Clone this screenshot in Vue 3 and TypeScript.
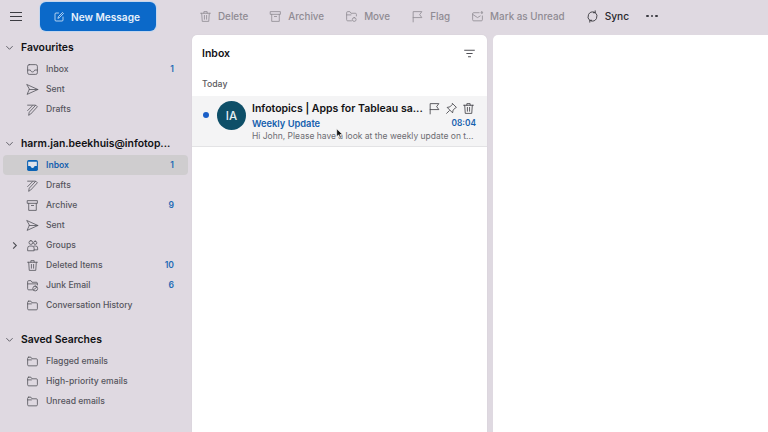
<script setup lang="ts">
interface FolderRow {
  name: string;
  icon: string;
  count?: number;
  selected?: boolean;
  expander?: boolean;
}

interface FolderGroup {
  title: string;
  rows: FolderRow[];
}

interface ToolItem {
  name: string;
  icon: string;
  active?: boolean;
}

// 24x24 stroke paths
const icons: Record<string, string[]> = {
  compose: ['M11 4H6a2 2 0 0 0-2 2v12a2 2 0 0 0 2 2h12a2 2 0 0 0 2-2v-6', 'M10 14l1-3 8-8 2 2-8 8z'],
  inbox: ['M6 3h12a3 3 0 0 1 3 3v12a3 3 0 0 1-3 3H6a3 3 0 0 1-3-3V6a3 3 0 0 1 3-3z', 'M3 13h5c1 2.500 2.200 3.500 4 3.500s3-1 4-3.500h5'],
  sent: ['M2 3l20 9-20 9 4-9z', 'M6 12h16'],
  drafts: ['M5 22l1-5L18 4l3 3L9 20z', 'M3 4h14', 'M3 14L12 5'],
  archive: ['M3 3h18v5H3z', 'M5 8v13h14V8', 'M10 12h4'],
  groups: ['M9 3a3.500 3.500 0 1 1 0 7 3.500 3.500 0 0 1 0-7z', 'M17 4a3 3 0 1 1 0 6 3 3 0 0 1 0-6z', 'M3 21v-4a4 4 0 0 1 4-4h4a4 4 0 0 1 4 4v4z', 'M15 13h3a3.500 3.500 0 0 1 3.500 3.500V20H15'],
  trash: ['M3 6h18', 'M9 6V3h6v3', 'M5 6l1 15h12l1-15', 'M10 10v7', 'M14 10v7'],
  junk: ['M12 20H5a2 2 0 0 1-2-2V5a2 2 0 0 1 2-2h4l2 3h8a2 2 0 0 1 2 2v3', 'M3 9h18', 'M17 13a4.500 4.500 0 1 1 0 9 4.500 4.500 0 0 1 0-9z', 'M14 20l6-5'],
  folder: ['M5 4h4l2 3h8a2 2 0 0 1 2 2v9a2 2 0 0 1-2 2H5a2 2 0 0 1-2-2V6a2 2 0 0 1 2-2z', 'M3 9h7'],
  move: ['M12 20H5a2 2 0 0 1-2-2V5a2 2 0 0 1 2-2h4l2 3h8a2 2 0 0 1 2 2v3', 'M3 9h8', 'M17 14a3.500 3.500 0 1 1 0 7 3.500 3.500 0 0 1 0-7z'],
  flag: ['M4 22V3h16l-4 5.500 4 5.500H4'],
  unread: ['M15 5H5a2 2 0 0 0-2 2v11a2 2 0 0 0 2 2h14a2 2 0 0 0 2-2v-7', 'M3 8l9 6 5-3', 'M20 3.500a1.500 1.500 0 1 1 0 3 1.500 1.500 0 0 1 0-3z'],
  sync: ['M15 3.800A9 9 0 0 0 7 19.500', 'M9 20.200A9 9 0 0 0 17 4.500', 'M17 1.500V5h-3.500', 'M7 22.500V19h3.500'],
  pin: ['M14 3l7 7-2 1-4 4-1 5-10-10 5-1 4-4z', 'M8 16l-5 5'],
  filter: ['M3 6h18', 'M7 12h10', 'M10 18h4']
};

const tools: ToolItem[] = [
  { name: 'Delete', icon: 'trash' },
  { name: 'Archive', icon: 'archive' },
  { name: 'Move', icon: 'move' },
  { name: 'Flag', icon: 'flag' },
  { name: 'Mark as Unread', icon: 'unread' },
  { name: 'Sync', icon: 'sync', active: true }
];

const groups: FolderGroup[] = [
  {
    title: 'Favourites',
    rows: [
      { name: 'Inbox', icon: 'inbox', count: 1 },
      { name: 'Sent', icon: 'sent' },
      { name: 'Drafts', icon: 'drafts' }
    ]
  },
  {
    title: 'harm.jan.beekhuis@infotop...',
    rows: [
      { name: 'Inbox', icon: 'inbox', count: 1, selected: true },
      { name: 'Drafts', icon: 'drafts' },
      { name: 'Archive', icon: 'archive', count: 9 },
      { name: 'Sent', icon: 'sent' },
      { name: 'Groups', icon: 'groups', expander: true },
      { name: 'Deleted Items', icon: 'trash', count: 10 },
      { name: 'Junk Email', icon: 'junk', count: 6 },
      { name: 'Conversation History', icon: 'folder' }
    ]
  },
  {
    title: 'Saved Searches',
    rows: [
      { name: 'Flagged emails', icon: 'folder' },
      { name: 'High-priority emails', icon: 'folder' },
      { name: 'Unread emails', icon: 'folder' }
    ]
  }
];
</script>

<template>
  <div class="app">
    <header class="toolbar">
      <div class="burger"><span></span><span></span><span></span></div>
      <button class="new-message">
        <svg class="ic compose" viewBox="0 0 24 24"><path v-for="d in icons.compose" :key="d" :d="d" /></svg>
        New Message
      </button>
      <div class="tools">
        <div v-for="tool in tools" :key="tool.name" class="tool" :class="{ active: tool.active }">
          <svg class="ic" viewBox="0 0 24 24"><path v-for="d in icons[tool.icon]" :key="d" :d="d" /></svg>
          <span>{{ tool.name }}</span>
        </div>
        <div class="more"><i></i><i></i><i></i></div>
      </div>
    </header>

    <div class="body">
      <aside class="sidebar">
        <section v-for="group in groups" :key="group.title" class="group">
          <div class="group-title">
            <svg class="chev" viewBox="0 0 10 10"><path d="M1.500 3.500L5 7l3.500-3.500" /></svg>
            <span>{{ group.title }}</span>
          </div>
          <div v-for="row in group.rows" :key="row.name" class="row" :class="{ selected: row.selected }">
            <svg v-if="row.expander" class="expander" viewBox="0 0 10 10"><path d="M3.500 1.500L7 5 3.500 8.500" /></svg>
            <svg class="ic" viewBox="0 0 24 24">
              <template v-if="row.selected">
                <rect x="2" y="2" width="20" height="20" rx="3" class="inbox-fill" />
                <path class="inbox-notch" d="M4 5h16v8h-4c-1 2.500-2.200 3.500-4 3.500s-3-1-4-3.500H4z" />
              </template>
              <path v-else v-for="d in icons[row.icon]" :key="d" :d="d" />
            </svg>
            <span class="row-name">{{ row.name }}</span>
            <span v-if="row.count" class="count">{{ row.count }}</span>
          </div>
        </section>
      </aside>

      <main class="list">
        <div class="list-head">
          <span>Inbox</span>
          <svg class="ic filter" viewBox="0 0 24 24"><path v-for="d in icons.filter" :key="d" :d="d" /></svg>
        </div>
        <div class="day">Today</div>
        <article class="mail">
          <span class="dot"></span>
          <div class="avatar">IA</div>
          <div class="mail-text">
            <div class="mail-top">
              <span class="sender">Infotopics | Apps for Tableau sa...</span>
              <svg class="ic" viewBox="0 0 24 24"><path v-for="d in icons.flag" :key="d" :d="d" /></svg>
              <svg class="ic" viewBox="0 0 24 24"><path v-for="d in icons.pin" :key="d" :d="d" /></svg>
              <svg class="ic" viewBox="0 0 24 24"><path v-for="d in icons.trash" :key="d" :d="d" /></svg>
            </div>
            <div class="mail-mid">
              <span>Weekly Update</span>
              <span class="time">08:04</span>
            </div>
            <div class="preview">Hi John, Please have a look at the weekly update on t...</div>
          </div>
          <svg class="cursor" viewBox="0 0 12 16"><path d="M1 1v12l3-3 2 5 2-1-2-4.500h4z" /></svg>
        </article>
      </main>

      <div class="reading"></div>
    </div>
  </div>
</template>

<style>
html, body {
  margin: 0;
  background: #dfd9e1;
}
</style>

<style scoped>
.app {
  width: 768px;
  height: 432px;
  overflow: hidden;
  background: #dfd9e1;
  font-family: "Inter", "Liberation Sans", sans-serif;
  color: #2c2c30;
  display: flex;
  flex-direction: column;
}

.ic {
  width: 13px;
  height: 13px;
  flex: none;
  fill: none;
  stroke: currentColor;
  stroke-width: 1.500;
  stroke-linecap: round;
  stroke-linejoin: round;
}

.toolbar {
  height: 35px;
  flex: none;
  display: flex;
  align-items: flex-start;
}

.burger {
  width: 12px;
  margin: 12px 18px 0 10px;
  display: flex;
  flex-direction: column;
  gap: 3px;
}

.burger span {
  height: 1px;
  background: #3c3c42;
}

.new-message {
  width: 116px;
  height: 29px;
  margin-top: 2px;
  padding: 0 0 0 13px;
  border: 0;
  border-radius: 6px;
  background: #0b69c9;
  box-shadow: 0 0 0 1px #c3d6ee;
  color: #e8f1fb;
  font: 600 10.100px "Inter", "Liberation Sans", sans-serif;
  display: flex;
  align-items: center;
  gap: 6px;
}

.compose {
  width: 12px;
  height: 12px;
  color: #e8f1fb;
}

.tools {
  display: flex;
  align-items: center;
  height: 32px;
  margin-left: 43px;
  gap: 21px;
}

.tool {
  display: flex;
  align-items: center;
  gap: 6px;
  font-size: 9.850px;
  font-weight: 500;
  color: #8f8b93;
  white-space: nowrap;
}

.tool.active {
  color: #28282c;
  font-size: 10.200px;
}

.more {
  display: flex;
  gap: 2px;
  margin-left: -4px;
}

.more i {
  width: 2.500px;
  height: 2.500px;
  border-radius: 50%;
  background: #3a3a40;
}

.body {
  flex: 1;
  display: flex;
  min-height: 0;
}

.sidebar {
  width: 192px;
  flex: none;
  padding-top: 3px;
  display: flex;
  flex-direction: column;
  gap: 15px;
}

.group-title {
  height: 18px;
  display: flex;
  align-items: center;
  gap: 7px;
  padding-left: 5px;
  font-size: 10.400px;
  font-weight: 600;
  color: #111114;
  white-space: nowrap;
}

.chev {
  width: 9px;
  height: 9px;
  fill: none;
  stroke: #55555c;
  stroke-width: 1;
}

.row {
  position: relative;
  height: 20px;
  margin: 0 4px 0 3px;
  padding: 0 14px 0 23px;
  display: flex;
  align-items: center;
  border-radius: 4px;
  font-size: 8.600px;
  color: #55555d;
  font-weight: 500;
}

.group-title + .row {
  margin-top: 3px;
}

.row.selected {
  background: #cfcdcf;
  color: #1560ae;
  font-weight: 600;
}

.inbox-fill {
  fill: #0b63b5;
  stroke: none;
}

.inbox-notch {
  fill: #dfe3ea;
  stroke: none;
}

.expander {
  position: absolute;
  left: 7px;
  width: 9px;
  height: 9px;
  fill: none;
  stroke: #4b4b52;
  stroke-width: 1.200;
}

.row-name {
  margin-left: 7px;
  flex: 1;
  white-space: nowrap;
}

.count {
  color: #1e6bb5;
  font-weight: 600;
}

.list {
  width: 295px;
  flex: none;
  background: #fff;
  border-radius: 5px 5px 0 0;
  box-shadow: 0 0 1px rgba(0, 0, 0, 0.120);
}

.list-head {
  height: 37px;
  padding: 0 11px 0 10px;
  display: flex;
  align-items: center;
  justify-content: space-between;
  font-size: 10.500px;
  font-weight: 600;
  color: #111114;
}

.filter {
  width: 13px;
  height: 13px;
  color: #4a4a50;
  stroke-width: 1.800;
}

.day {
  height: 23px;
  padding-left: 10px;
  display: flex;
  align-items: center;
  font-size: 8.700px;
  color: #5a5a60;
  font-weight: 500;
}

.mail {
  position: relative;
  height: 51px;
  padding: 5px 11px 0 11px;
  display: flex;
  align-items: flex-start;
  background: #f4f4f5;
  border-bottom: 1px solid #e3e3e5;
  box-sizing: border-box;
  margin: 1px 0 0;
}

.dot {
  width: 6px;
  height: 6px;
  margin-top: 11px;
  border-radius: 50%;
  background: #1a5fc8;
  flex: none;
}

.avatar {
  width: 29px;
  height: 29px;
  margin-left: 8px;
  flex: none;
  border-radius: 50%;
  background: #0e4f68;
  color: #e7f0f3;
  font-size: 11.500px;
  font-weight: 500;
  display: flex;
  align-items: center;
  justify-content: center;
}

.mail-text {
  margin-left: 6px;
  flex: 1;
  min-width: 0;
}

.mail-top {
  height: 15px;
  padding-right: 1px;
  display: flex;
  align-items: center;
  gap: 4px;
  color: #3c3c42;
}

.sender {
  flex: 1;
  font-size: 10.500px;
  font-weight: 600;
  color: #111114;
  white-space: nowrap;
}

.mail-mid {
  height: 14px;
  display: flex;
  align-items: center;
  justify-content: space-between;
  font-size: 9.300px;
  font-weight: 600;
  color: #1560ae;
}

.time {
  font-size: 8.300px;
}

.preview {
  height: 12px;
  line-height: 12px;
  font-size: 8.500px;
  color: #6c6c72;
  white-space: nowrap;
}

.cursor {
  position: absolute;
  left: 144px;
  top: 32px;
  width: 8px;
  height: 11px;
  fill: #111;
  stroke: #fff;
  stroke-width: 1;
}

.reading {
  flex: 1;
  margin-left: 6px;
  background: #fff;
  border-radius: 5px 0 0 0;
}
</style>
